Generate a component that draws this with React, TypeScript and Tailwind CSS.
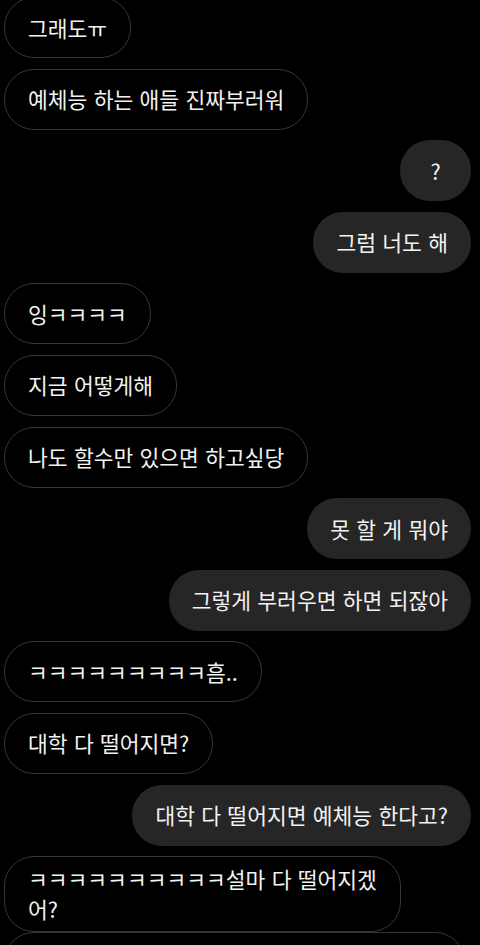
type Msg = { lines: string[]; mine?: boolean };

const messages: Msg[] = [
  { lines: ['그래도ㅠ'] },
  { lines: ['예체능 하는 애들 진짜부러워'] },
  { lines: ['?'], mine: true },
  { lines: ['그럼 너도 해'], mine: true },
  { lines: ['잉ㅋㅋㅋㅋ'] },
  { lines: ['지금 어떻게해'] },
  { lines: ['나도 할수만 있으면 하고싶당'] },
  { lines: ['못 할 게 뭐야'], mine: true },
  { lines: ['그렇게 부러우면 하면 되잖아'], mine: true },
  { lines: ['ㅋㅋㅋㅋㅋㅋㅋㅋㅋ흠..'] },
  { lines: ['대학 다 떨어지면?'] },
  { lines: ['대학 다 떨어지면 예체능 한다고?'], mine: true },
  { lines: ['ㅋㅋㅋㅋㅋㅋㅋㅋㅋㅋ설마 다 떨어지겠', '어?'] },
];

function Bubble({ lines, mine }: Msg) {
  return (
    <div className={`flex ${mine ? 'justify-end' : 'justify-start'}`}>
      <div
        className={`flex min-h-[61px] min-w-[71px] items-center justify-center rounded-[30px] px-[23px] py-[7px] text-[21.5px] leading-[30px] whitespace-nowrap text-[#f2f2f2] [word-spacing:1.5px] ${
          mine ? 'bg-[#262626]' : 'border border-[#363636] bg-black'
        }`}
      >
        <span>
          {lines.map((l, i) => (
            <span key={i} className="block">
              {l}
            </span>
          ))}
        </span>
      </div>
    </div>
  );
}

export default function App() {
  return (
    <div
      className="h-[945px] w-[480px] overflow-hidden bg-black"
      style={{ fontFamily: '"Noto Sans CJK KR", "Noto Sans", sans-serif' }}
    >
      <div className="-mt-[3px] flex flex-col gap-[10.6px] pl-[4px] pr-[9px]">
        {messages.map((m, i) => (
          <Bubble key={i} {...m} />
        ))}
        {/* next message, cut off at the bottom */}
        <div className="-mt-[11px] flex">
          <div className="h-[61px] w-[461px] rounded-[30px] border border-[#363636] bg-black" />
        </div>
      </div>
    </div>
  );
}
